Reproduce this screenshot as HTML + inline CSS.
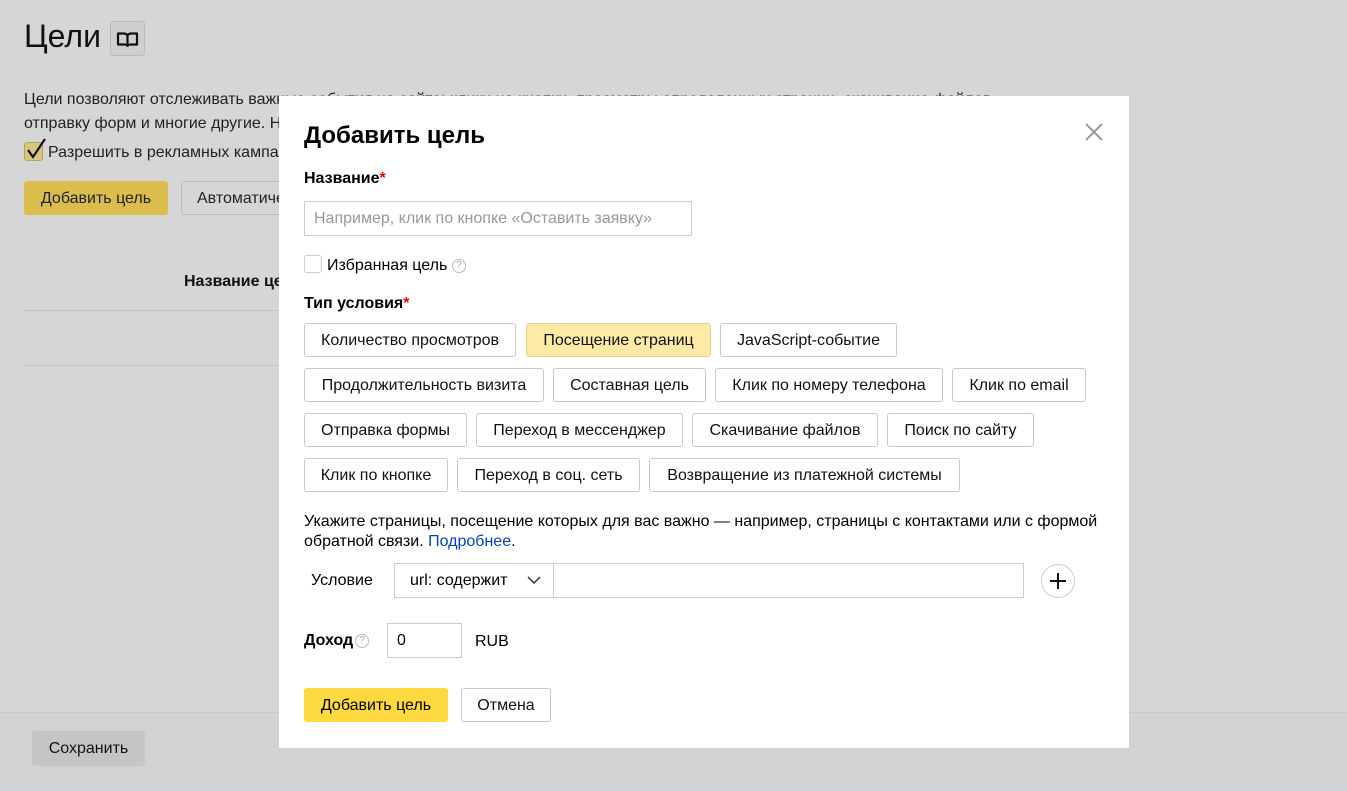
<!DOCTYPE html>
<html><head><meta charset="utf-8"><style>
*{box-sizing:border-box;margin:0;padding:0}
body{width:1347px;height:791px;background:#d6d6d6;font-family:"Liberation Sans",Arial,sans-serif;color:#000;position:relative;overflow:hidden;font-size:16px}
.a{position:absolute;white-space:nowrap}
.btn{position:absolute;height:34px;border:1px solid #c9c9c9;border-radius:3px;background:#fff;font-size:16px;line-height:33px;text-align:center;color:#111}
.q{display:inline-block;width:14px;height:14px;border:1px solid #bbb;border-radius:50%;font-size:10px;line-height:12px;text-align:center;color:#aaa;vertical-align:middle;font-weight:normal}
</style></head><body>
<div class="a" style="left:24px;top:18px;font-size:32px;color:#111">Цели</div>
<div class="a" style="left:110px;top:21px;width:35px;height:35px;border:1px solid #bbb;border-radius:3px;background:#cfcfcf">
<svg width="33" height="33" viewBox="0 0 33 33"><path d="M7 11.5h5.5q3.5 0 4 2.5q.5-2.5 4-2.5h5.5v11h-6q-3 0-3.5 1.5q-.5-1.5-3.5-1.5h-6z M16.5 14v10" fill="none" stroke="#111" stroke-width="2.2" stroke-linejoin="round"/></svg></div>
<div class="a" style="left:24px;top:88px;line-height:24px;color:#222">Цели позволяют отслеживать важные события на сайте: клики на кнопки, просмотры определенных страниц, скачивание файлов,<br>отправку форм и многие другие. Н</div>
<div class="a" style="left:24px;top:142px;width:19px;height:19px;border:1px solid #b8a25a;border-radius:3px;background:#d8c680"></div>
<svg class="a" style="left:25px;top:137px" width="22" height="24"><path d="M3 13l5 7L20 2" fill="none" stroke="#111" stroke-width="2.2"/></svg>
<div class="a" style="left:48px;top:144px;color:#222">Разрешить в рекламных кампаниях</div>
<div class="a" style="left:24px;top:181px;width:144px;height:34px;border-radius:3px;background:#dabd4c;line-height:35px;text-align:center;color:#222">Добавить цель</div>
<div class="a" style="left:181px;top:181px;width:150px;height:34px;border:1px solid #bbb;border-radius:3px;line-height:33px;padding-left:15px;color:#222">Автоматические</div>
<div class="a" style="left:184px;top:273px;font-weight:bold;color:#111">Название цели</div>
<div class="a" style="left:24px;top:310px;width:260px;border-top:1px solid #c4c4c4"></div>
<div class="a" style="left:24px;top:365px;width:260px;border-top:1px solid #c4c4c4"></div>
<div class="a" style="left:0;top:712px;width:1347px;height:73px;background:#d3d2d0;border-top:1px solid #c8c8c8"></div>
<div class="a" style="left:0;top:785px;width:1347px;height:6px;background:#cfd2d6"></div>
<div class="a" style="left:32px;top:731px;width:113px;height:35px;border-radius:3px;background:#c6c5c3;line-height:36px;text-align:center;color:#111">Сохранить</div>

<div class="a" style="left:279px;top:96px;width:850px;height:652px;background:#fff"></div>
<div class="a" style="left:304px;top:122px;font-size:24px;font-weight:bold">Добавить цель</div>
<svg class="a" style="left:1084px;top:122px" width="20" height="20"><path d="M2 2L18 18M18 2L2 18" stroke="#999" stroke-width="2"/></svg>
<div class="a" style="left:304px;top:170px;font-weight:bold">Название<span style="color:#e00">*</span></div>
<div class="a" style="left:304px;top:201px;width:388px;height:35px;border:1px solid #ccc;line-height:34px;padding-left:9px;color:#999">Например, клик по кнопке «Оставить заявку»</div>
<div class="a" style="left:304px;top:255px;width:18px;height:18px;border:1px solid #ccc;border-radius:3px"></div>
<div class="a" style="left:327px;top:257px">Избранная цель <span class="q">?</span></div>
<div class="a" style="left:304px;top:295px;font-weight:bold">Тип условия<span style="color:#e00">*</span></div>
<div class="btn" style="left:304px;top:323px;width:212px">Количество просмотров</div>
<div class="btn" style="left:526px;top:323px;width:185px;background:#fdeba5;border-color:#e6d48c">Посещение страниц</div>
<div class="btn" style="left:720px;top:323px;width:177px">JavaScript-событие</div>
<div class="btn" style="left:304px;top:368px;width:240px">Продолжительность визита</div>
<div class="btn" style="left:553px;top:368px;width:153px">Составная цель</div>
<div class="btn" style="left:715px;top:368px;width:228px">Клик по номеру телефона</div>
<div class="btn" style="left:952px;top:368px;width:134px">Клик по email</div>
<div class="btn" style="left:304px;top:413px;width:163px">Отправка формы</div>
<div class="btn" style="left:476px;top:413px;width:207px">Переход в мессенджер</div>
<div class="btn" style="left:692px;top:413px;width:186px">Скачивание файлов</div>
<div class="btn" style="left:887px;top:413px;width:147px">Поиск по сайту</div>
<div class="btn" style="left:304px;top:458px;width:144px">Клик по кнопке</div>
<div class="btn" style="left:457px;top:458px;width:183px">Переход в соц. сеть</div>
<div class="btn" style="left:649px;top:458px;width:311px">Возвращение из платежной системы</div>
<div class="a" style="left:304px;top:512px;line-height:20px">Укажите страницы, посещение которых для вас важно — например, страницы с контактами или с формой<br>обратной связи. <span style="color:#04b">Подробнее</span>.</div>
<div class="a" style="left:311px;top:572px">Условие</div>
<div class="a" style="left:394px;top:563px;width:630px;height:35px;border:1px solid #ccc"></div>
<div class="a" style="left:553px;top:563px;height:35px;border-left:1px solid #ccc"></div>
<div class="a" style="left:410px;top:572px">url: содержит</div>
<svg class="a" style="left:526px;top:575px" width="16" height="10"><path d="M2 2l6 6 6-6" fill="none" stroke="#333" stroke-width="1.5"/></svg>
<div class="a" style="left:1041px;top:564px;width:34px;height:34px;border:1px solid #ccc;border-radius:50%"></div>
<svg class="a" style="left:1049px;top:572px" width="18" height="18"><path d="M9 1v16M1 9h16" stroke="#111" stroke-width="2"/></svg>
<div class="a" style="left:304px;top:632px;font-weight:bold">Доход<span class="q" style="margin-left:2px">?</span></div>
<div class="a" style="left:387px;top:623px;width:75px;height:35px;border:1px solid #ccc;line-height:34px;padding-left:9px">0</div>
<div class="a" style="left:475px;top:633px">RUB</div>
<div class="a" style="left:304px;top:688px;width:144px;height:34px;border-radius:3px;background:#fdd93f;line-height:35px;text-align:center">Добавить цель</div>
<div class="btn" style="left:461px;top:688px;width:90px">Отмена</div>
</body></html>
